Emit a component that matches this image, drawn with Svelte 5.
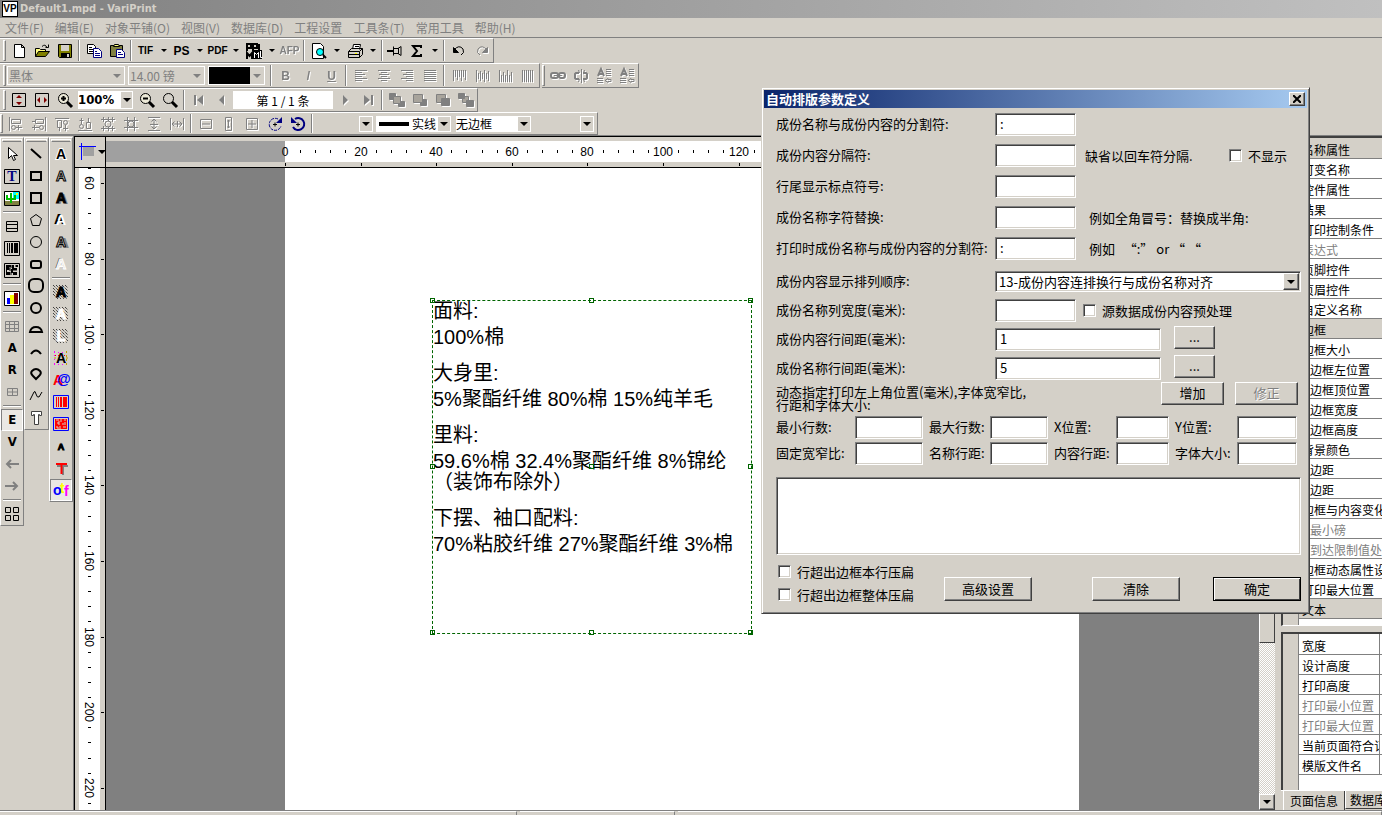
<script>
  const menus = ["文件(F)", "编辑(E)", "对象平铺(O)", "视图(V)", "数据库(D)", "工程设置", "工具条(T)", "常用工具", "帮助(H)"];

  // all icons are drawn on a 16x16 grid
  const lines = (rows) => rows.map(([x, y, w]) => `<path d="M${x} ${y}.5h${w}"/>`).join("");
  const letter = (attrs, extra = "") => `${extra}<text x="8" y="13" text-anchor="middle" ${attrs}>A</text>`;
  const hatch = '<path stroke-dasharray="1 1" d="M0 1l14 14M0 4l11 11M0 7l8 8M0 10l5 5M3 1l12 12M6 1l9 9M9 1l6 6M12 1l3 3"/>';
  const noise = '<path d="M3 4h3M8 3v3M11 4h2M4 7h2v2M9 8h4M3 11h2v2M7 10v3M10 11h3M7 6h-2M12 6v1"/>';
  const bars = '<path d="M3.5 3v10M5.5 3v10M10.5 3v10M13.5 3v10"/><path stroke-width="2" d="M8 3v10M12 3v10"/>';

  const icons = {
    new: '<path fill="#fff" d="M3.5 1.5h7l3 3v10h-10zM10.5 1.5v3h3"/>',
    open: '<path fill="#ffff80" d="M1.5 13.5v-8h4l1 1h5v3"/><path fill="#808000" d="M1.5 13.5l3-5h11l-4 5z"/><path d="M8 3.5q3-3 5 1M14.5 1.5v3h-3"/>',
    save: '<path fill="#808000" d="M1.5 1.5h13v13h-12l-1-1z"/><path fill="#d4d0c8" stroke="none" d="M4 2h8v6H4z"/><path fill="#000" stroke="none" d="M4 10h9v5H4z"/><path fill="#d4d0c8" stroke="none" d="M10 11h2v3h-2z"/>',
    copy: '<path fill="#fff" d="M1.5 1.5h6l2 2v7h-8z"/><path d="M3 4.5h3M3 6.5h4M3 8.5h4"/><path fill="#fff" stroke="#000080" d="M7.5 5.5h5l3 3v6h-8z"/><path stroke="#000080" d="M9 8.5h2M9 10.5h5M9 12.5h5"/>',
    paste: '<path fill="#808040" d="M1.5 2.5h12v11h-12z"/><path fill="#ffff80" d="M4.5 3.5l1-2h4l1 2z"/><path fill="#fff" stroke="#000080" d="M7.5 6.5h5l3 3v5h-8z"/><path stroke="#000080" d="M9 9.5h3M9 11.5h5"/>',
    ppml: '<path fill="#000" stroke="none" d="M7 7h9v9H7z"/><path stroke="#000" stroke-width="2" d="M1 8V1h4v4H1M7 8V1h4v4H7M13 1v6M1 16v-6l2.500 3L6 10v6"/><path stroke="#fff" d="M8.500 15V9.500l2 2 2-2V15M14.500 8v6.500h2"/>',
    preview: '<path fill="#fff" d="M1.5 .5h8l3 3v12h-11z"/><circle cx="9" cy="9" r="3.5" fill="#00ffff"/><path stroke-width="2" d="M12 12l3 3"/>',
    print: '<path fill="#fff" d="M5.5 6.5l1-5h7l-1 5"/><path fill="#d4d0c8" d="M1.5 8.5l3-3h11v6l-3 3h-11zM1.5 8.5h11l3-3M12.5 8.5v6M1 11.5h11"/><path stroke="#ffff00" d="M8 10.5h2"/><path d="M8 3.5h4"/>',
    pin: '<path stroke-width="2" d="M0 8h6"/><path fill="#d4d0c8" d="M6.5 3.5v9M7 5.5h4l3-2v9l-3-2H7M11.5 5v6"/>',
    sigma: '<path stroke-width="2" d="M12 5V3H4l4 5-4 5h8v-2"/>',
    undo: '<path d="M3 7q5-6 9-1 2 4-2 6"/><path fill="currentColor" d="M2.5 4.5v5h5z"/>',
    redo: '<path d="M13 7q-5-6-9-1-2 4 2 6"/><path fill="currentColor" d="M13.5 4.5v5h-5z"/>',
    alignL: lines([[2, 2, 12], [2, 4, 7], [2, 6, 10], [2, 8, 7], [2, 10, 12], [2, 12, 7]]),
    alignC: lines([[2, 2, 12], [5, 4, 6], [3, 6, 10], [5, 8, 6], [2, 10, 12], [5, 12, 6]]),
    alignR: lines([[2, 2, 12], [7, 4, 7], [4, 6, 10], [7, 8, 7], [2, 10, 12], [7, 12, 7]]),
    alignJ: lines([[2, 2, 12], [2, 4, 12], [2, 6, 12], [2, 8, 12], [2, 10, 12], [2, 12, 12]]),
    vertT: '<path d="M2.5 2v11M4.5 2v7M6.5 2v10M8.5 2v7M10.5 2v11M12.5 2v7M14.5 2v10"/>',
    vertC: '<path d="M2.5 2v12M4.5 5v6M6.5 3v10M8.5 5v6M10.5 2v12M12.5 5v6M14.5 3v10"/>',
    vertB: '<path d="M2.5 2v12M4.5 7v7M6.5 4v10M8.5 7v7M10.5 2v12M12.5 7v7M14.5 4v10"/>',
    vertJ: '<path d="M2.5 2v12M4.5 2v12M6.5 2v12M8.5 2v12M10.5 2v12M12.5 2v12"/>',
    link: '<rect x="1" y="5" width="7" height="5" rx="2" stroke-width="2"/><rect x="9" y="5" width="6" height="5" rx="2" stroke-width="2"/><path d="M4 7.5h8"/>',
    unlink: '<path stroke-width="2" d="M6 5H3l-1 1v4l1 1h3M10 5h3l1 1v4l-1 1h-3"/><path d="M8.5 1v14M5.5 2l1 3M11.5 2l-1 3M5.5 14l1-3M11.5 14l-1-3"/>',
    flow: '<path stroke-width="2" d="M2 8l3-7 3 7M3 6h4"/><path d="M10 1.5h5M10 3.5h5M10 5.5h5M10 7.5h5M1 10.5h6M1 12.5h6M1 14.5h6M9 12.5l3-2v1h3v2h-3v1z"/>',
    fitPage: '<path d="M1.5 1.5h13v13h-13z"/><path fill="#800000" stroke="none" d="M8 3l3 3H5zM8 13l3-3H5z"/>',
    fitWidth: '<path d="M1.5 1.5h13v13h-13z"/><path fill="#800000" stroke="none" d="M3 8l3-3v6zM13 8l-3-3v6z"/>',
    zoomIn: '<circle cx="6.5" cy="6.5" r="5" fill="#ece9d8"/><path stroke-width="2" d="M4 6.5h5M6.5 4v5"/><path stroke-width="3" d="M10 10l5 5"/>',
    zoomOut: '<circle cx="6.5" cy="6.5" r="5" fill="#ece9d8"/><path stroke-width="2" d="M4 6.5h5"/><path stroke-width="3" d="M10 10l5 5"/>',
    zoom: '<circle cx="6.5" cy="6.5" r="5" fill="#d4d0c8"/><path stroke-width="3" d="M10 10l5 5"/>',
    first: '<path stroke-width="2" d="M4 3v10"/><path fill="currentColor" stroke="none" d="M12 3v10L6 8z"/>',
    prev: '<path fill="currentColor" stroke="none" d="M10 3v10L5 8z"/>',
    next: '<path fill="currentColor" stroke="none" d="M6 3v10l5-5z"/>',
    last: '<path stroke-width="2" d="M12 3v10"/><path fill="currentColor" stroke="none" d="M4 3v10l6-5z"/>',
    front: '<path fill="currentColor" d="M.5 1.5h6v6h-6zM9.5 9.5h6v5h-6z"/><path fill="#a8a49c" d="M4.5 4.5h7v7h-7z"/>',
    forward: '<path fill="currentColor" d="M8.5 7.5h6v6h-6z"/><path fill="#a8a49c" d="M1.5 2.5h9v8h-9z"/>',
    backward: '<path fill="#a8a49c" d="M1.5 2.5h9v8h-9z"/><path fill="currentColor" d="M6.5 6.5h8v7h-8z"/>',
    back: '<path fill="#a8a49c" d="M4.5 4.5h6v6h-6z"/><path fill="currentColor" d="M.5 1.5h6v5h-6zM8.5 8.5h7v6h-7z"/>',
    edgeL: '<path d="M1.5 1v14M3.5 3.5h9v4h-9z"/><circle cx="5.5" cy="11.5" r="2"/><path d="M8 11.5h6M10.5 9v5"/>',
    edgeR: '<path d="M14.5 1v14M4.5 3.5h8v4h-8z"/><circle cx="10.5" cy="11.5" r="2"/><path d="M1 5.5h3M1 11.5h7M3.5 9v5"/>',
    edgeT: '<path d="M1 2.5h14M3.5 4.5h4v7h-4z"/><circle cx="11.5" cy="6.5" r="2"/><path d="M11.5 9v6M9 12.5h5M5.5 12v3"/>',
    edgeB: '<path d="M1 14.5h14M9.5 6.5h4v6h-4z"/><circle cx="4.5" cy="10.5" r="2"/><path d="M4.5 2v6M2.5 4.5h4M11.5 2v4"/>',
    midH: '<path d="M1 3.5h14M1 12.5h14M3.5 1v5M8.500 1v4M12.5 1v5M3.5 10v5M8.500 11v4M12.5 10v5"/><circle cx="8" cy="8" r="3"/>',
    midV: '<path d="M1 4.5h14M1 11.5h14M4.5 1v14M11.5 1v14"/><circle cx="8" cy="8" r="3"/>',
    sameH: '<path d="M2 1.5h12M2 14.5h12M8 3v10M5.5 5.5L8 3l2.5 2.5M5.5 10.5L8 13l2.5-2.5M4 8.5h8"/>',
    sameW: '<path d="M1.5 2v12M14.5 2v12M3 8h10M5.5 5.5L3 8l2.5 2.5M10.5 5.5L13 8l-2.5 2.5M8.5 5v6"/>',
    boxH: '<path d="M2.5 3.5h11v9h-11zM4 8h8"/>',
    boxV: '<path d="M4.5 1.5h6v13h-6zM7.5 4v8M6 5h3M6 11h3"/>',
    boxHV: '<path d="M2.5 2.5h11v11h-11zM4 8h8M8 4v8"/>',
    rotR: '<path d="M11 3a6 6 0 1 0 3 7" stroke="#000080" stroke-dasharray="3 1"/><path d="M15 1v6H9z" fill="#000080" stroke="none"/><path d="M8 6.500v4M6 8.500h4"/>',
    rotL: '<path d="M5 3a6 6 0 1 1-2 8" stroke="#000080" stroke-width="2"/><path d="M1 1v6h6z" fill="#000080" stroke="none"/><path d="M8 6.500v4M6 8.500h4"/>',
    pointer: '<path fill="#fff" d="M4.5 1.5v11l3-3 2 5 2-1-2-4h4z"/>',
    textBox: '<path d="M.5 1.5h15v14H.5z"/><text class="serif" x="8" y="13" text-anchor="middle" fill="#000080">T</text>',
    image: '<path fill="#fff" d="M.5 1.5h15v14H.5z"/><path fill="#00ffff" stroke="none" d="M9 2h6v7H9z"/><path fill="#808040" stroke="none" d="M1 11h14v4H1z"/><path stroke="#00c000" stroke-width="2" d="M7 3v10M3 5v4h4M11 5v4H7"/><path fill="#ffff00" stroke="none" d="M12 3h2v2h-2z"/>',
    table: '<path d="M2.5 3.5h11v10h-11zM2.5 6.5h11M2.5 10.5h11"/>',
    barcode: '<path d="M.5 1.5h15v14H.5z"/>' + bars,
    matrix: '<path d="M.5 1.5h15v14H.5z"/><path fill="#000" stroke="none" d="M2 3h5v2H5v3H3v2h3v3H2zM8 3h2v3h3v2H9v2h4v3H9v-2H7V7h1zM12 3h2v2h-2z"/>' + noise,
    chart: '<path fill="#fff" d="M.5 1.5h15v14H.5z"/><path fill="#0000ff" stroke="none" d="M3 8h3v6H3z"/><path fill="#ffff00" stroke="none" d="M6 5h4v9H6z"/><path fill="#800000" stroke="none" d="M10 3h4v11h-4z"/>',
    grid: '<path stroke="#808080" d="M1.5 3.5h13v10h-13zM1.5 6.5h13M1.5 10.5h13M5.5 3v11M10.5 3v11"/>',
    smallGrid: '<path stroke="#808080" d="M3.5 4.5h10v7h-10zM3 8h11M8.5 4v8"/>',
    left: '<path stroke="#808080" stroke-width="2" d="M3 8h12M7 4L3 8l4 4"/>',
    right: '<path stroke="#808080" stroke-width="2" d="M1 8h12M9 4l4 4-4 4"/>',
    tiles: '<path d="M1.5 1.5h5v5h-5zM9.5 1.5h5v5h-5zM1.5 9.5h5v5h-5zM9.5 9.5h5v5h-5z"/>',
    line: '<path stroke-width="2" d="M3 3l10 9"/>',
    rect: '<path stroke-width="2" d="M3 4h10v8H3z"/>',
    square: '<path stroke-width="2" d="M3 3h10v10H3z"/>',
    pentagon: '<path d="M8 2.5l5.5 4-2 7h-7l-2-7z"/>',
    circleThin: '<circle cx="8" cy="8" r="5.5"/>',
    roundRect: '<rect stroke-width="2" x="3" y="5" width="10" height="7" rx="2"/>',
    octagon: '<rect stroke-width="2" x="1" y="1" width="14" height="13" rx="5"/>',
    circle: '<circle stroke-width="2" cx="8" cy="8" r="5"/>',
    chord: '<path stroke-width="2" d="M2 10q1-5 6-5t6 5z"/>',
    arc: '<path stroke-width="2" d="M3 10q5-7 10 0"/>',
    drop: '<path stroke-width="2" d="M5 10q-3-3-1-5 4-4 8 0 2 2-1 5l-3 3z"/>',
    curve: '<path d="M2 12l4-8q1-2 2 2t3 3l3-5"/>',
    outlineT: '<path fill="#fff" stroke="#404040" d="M3.5 1.5h10v4h-2v-1h-1v10h-4v-10h-1v1h-2z"/>',
    a1: letter('fill="#000" stroke="#fff" stroke-width="2" paint-order="stroke"'),
    a2: letter('fill="#d4d0c8" stroke="#000"'),
    a3: letter('fill="#000" stroke="#000"', '<text x="10" y="14" text-anchor="middle" fill="#808080">A</text>'),
    a4: letter('fill="#fff"', '<text x="6" y="12" text-anchor="middle">A</text>'),
    a5: letter('fill="#d4d0c8" stroke="#000"', '<text x="11" y="14" text-anchor="middle" fill="#808080">A</text>'),
    a6: letter('fill="#e4e0d8" stroke="#fff"', '<text x="7" y="12" text-anchor="middle" fill="#606060">A</text>'),
    h1: letter('fill="#000" stroke="#000"', hatch),
    h2: letter('fill="#fff" stroke="#fff"', hatch),
    h3: hatch + '<text x="8" y="13" text-anchor="middle" fill="#fff" stroke="#fff">L</text>',
    dots: letter('fill="#000"', '<path stroke="#f0f" stroke-dasharray="1 3" d="M1 2.5h14M1 14.5h14M1.5 1v14"/><path stroke="#c0a000" stroke-dasharray="2 2" d="M1 8h14M13.5 1v14"/><path stroke="#f00" stroke-dasharray="1 2" d="M2 5.5h12"/><path stroke="#00f" d="M4 12.5h2M11 12.5h2"/>'),
    at: '<text x="0" y="13" fill="#f00">A</text><text x="4" y="12" fill="#00f">@</text>',
    redBars: `<g stroke="#f00">${bars}</g><path stroke="#00f" d="M.5 1.5h15v13H.5z"/>`,
    redMatrix: `<path fill="#f00" stroke="none" d="M2 3h12v10H2z"/><g stroke="#d4d0c8">${noise}</g><path stroke="#00f" d="M.5 1.5h15v13H.5z"/>`,
    tinyA: '<text class="tiny" x="8" y="12" text-anchor="middle" stroke="#000">A</text>',
    redT: '<path stroke="#808080" stroke-width="2" d="M4 6h11M10 6v9"/><path stroke="#f00" stroke-width="2" d="M3 4h11M8.5 4v10"/>',
    otf: '<text x="0" y="13" fill="#00f">o</text><text x="7" y="11" fill="#ff0">t</text><text x="11" y="14" fill="#f0f">f</text>',
  };

  const sep = { sep: true };
  const b = (icon, more = {}) => ({ icon, ...more });
  const dis = { disabled: true };

  const standardBar = [
    b("new"), b("open"), b("save"), sep, b("copy"), b("paste"), sep,
    { text: "TIF", drop: true }, { text: "PS", drop: true, wide: true }, { text: "PDF", drop: true },
    b("ppml", { drop: true }), { text: "AFP", disabled: true }, sep,
    b("preview", { drop: true }), b("print", { drop: true }), sep,
    b("pin"), b("sigma", { drop: true }), sep, b("undo"), b("redo", dis),
  ];
  const formatBar = [
    { text: "B", disabled: true, wide: true }, { text: "/", disabled: true, wide: true }, { text: "U", disabled: true, wide: true, under: true }, sep,
    b("alignL", dis), b("alignC", dis), b("alignR", dis), b("alignJ", dis), sep,
    b("vertT", dis), b("vertC", dis), b("vertB", dis), b("vertJ", dis),
  ];
  const linkBar = [b("link", dis), b("unlink", dis), b("flow", dis), b("flow", dis)];
  const arrangeBar = [
    b("edgeL", dis), b("edgeR", dis), b("edgeT", dis), b("edgeB", dis), b("midH", dis), b("midV", dis), b("sameH", dis), b("sameW", dis), sep,
    b("boxH", dis), b("boxV", dis), b("boxHV", dis), b("rotR"), b("rotL"), sep,
  ];

  const palettes = [
    [
      b("pointer"), b("textBox"), b("image"), sep, b("table"), b("barcode"), b("matrix"), sep, b("chart"), sep, b("grid"),
      { text: "A" }, { text: "R" }, b("smallGrid"), sep, { text: "E", pressed: true }, { text: "V" }, b("left"), b("right"), sep, b("tiles"),
    ],
    ["line", "rect", "square", "pentagon", "circleThin", "roundRect", "octagon", "circle", "chord", "arc", "drop", "curve", "outlineT"].map((n) => b(n)),
    [
      b("a1"), b("a2"), b("a3"), b("a4"), b("a5"), b("a6"), sep, b("h1"), b("h2"), b("h3"), b("dots"), b("at"),
      b("redBars"), b("redMatrix"), b("tinyA"), b("redT"), b("otf", { pressed: true }),
    ],
  ];

  // ruler: 3.78 px per millimetre, a tick every 4 mm, a number every 20 mm
  const scale = 3.78;
  const hMarks = Array.from({ length: 53 }, (_, i) => i * 4);
  const vMarks = Array.from({ length: 43 }, (_, i) => 56 + i * 4);
  const hPos = (v) => Math.round(179 + v * scale);
  const vPos = (v) => Math.round(15 + (v - 60) * scale);

  const fabric = [
    { name: "面料:", lines: ["100%棉"] },
    { name: "大身里:", lines: ["5%聚酯纤维 80%棉 15%纯羊毛"] },
    { name: "里料:", lines: ["59.6%棉 32.4%聚酯纤维 8%锦纶", "（装饰布除外）"] },
    { name: "下摆、袖口配料:", lines: ["70%粘胶纤维 27%聚酯纤维 3%棉"] },
  ];

  const props = [
    ["名称属性", "group"], ["可变名称"], ["控件属性"], ["结果"], ["打印控制条件"], ["表达式", "dim"], ["页脚控件"], ["页眉控件"],
    ["自定义名称"], ["边框", "group"], ["边框大小"], ["边框左位置", "sub"], ["边框顶位置", "sub"], ["边框宽度", "sub"],
    ["边框高度", "sub"], ["背景颜色"], ["边距", "sub"], ["边距", "sub"], ["边框与内容变化"], ["最小磅", "sub dim"],
    ["到达限制值处理", "sub dim"], ["边框动态属性设置"], ["打印最大位置"], ["文本", "group"],
  ];
  const pageProps = [["宽度"], ["设计高度"], ["打印高度"], ["打印最小位置", "dim"], ["打印最大位置", "dim"], ["当前页面符合订单"], ["模版文件名"]];

  const cells = [
    ["minRows", "最小行数:"], ["maxRows", "最大行数:"], ["posX", "X位置:"], ["posY", "Y位置:"],
    ["ratio", "固定宽窄比:"], ["nameGap", "名称行距:"], ["bodyGap", "内容行距:"], ["fontSize", "字体大小:"],
  ];

  let splitter = $state(":");
  let printSplitter = $state(":");
  let bodyLine = $state("1");
  let nameLine = $state("5");
  let open = $state(true);
</script>

{#snippet icon(name)}
  <svg class="icon" viewBox="0 0 16 16" aria-hidden="true">{@html icons[name]}</svg>
{/snippet}

{#snippet tool(item)}
  {#if item.sep}
    <span class="sep"></span>
  {:else}
    <button class="tool" class:pressed={item.pressed} class:pin={item.icon === "pin"} disabled={item.disabled} aria-label={item.icon || item.text}>
      {#if item.icon}
        {@render icon(item.icon)}
      {:else}
        <span class="glyph" class:wide={item.wide} class:under={item.under}>{item.text}</span>
      {/if}
    </button>
    {#if item.drop}
      <button class="drop" aria-label="more"><span class="arrow"></span></button>
    {/if}
  {/if}
{/snippet}

{#snippet combo(kind, label, value, disabled)}
  <span class="combo {kind}">
    <select aria-label={label} {disabled}><option>{value}</option></select>
    <span class="combo-button"><span class="arrow"></span></span>
  </span>
{/snippet}

<div class="app">
  <header class="title"><span class="logo">VP</span>Default1.mpd - VariPrint</header>
  <nav class="menu">
    {#each menus as m}
      <button>{m}</button>
    {/each}
  </nav>

  <div class="bars">
    <div class="bar">
      {#each standardBar as item}{@render tool(item)}{/each}
    </div>
    <div class="pair">
      <div class="bar">
        {@render combo("flat font", "字体", "黑体", true)}
        {@render combo("flat size", "字号", "14.00 镑", true)}
        {@render combo("flat color", "颜色", "", true)}
        <span class="sep"></span>
        {#each formatBar as item}{@render tool(item)}{/each}
      </div>
      <div class="bar">
        {#each linkBar as item}{@render tool(item)}{/each}
      </div>
    </div>
    <div class="bar">
      {#each [b("fitPage"), b("fitWidth"), b("zoomIn")] as item}{@render tool(item)}{/each}
      {@render combo("zoom", "缩放", "100%", false)}
      {#each [b("zoomOut"), b("zoom"), sep, b("first", dis), b("prev", dis)] as item}{@render tool(item)}{/each}
      <input class="record" aria-label="记录" value="第 1 / 1 条" />
      {#each [b("next", dis), b("last", dis), sep, b("front", dis), b("forward", dis), b("backward", dis), b("back", dis)] as item}{@render tool(item)}{/each}
    </div>
    <div class="bar">
      {#each arrangeBar as item}{@render tool(item)}{/each}
      {@render combo("blank", "线宽", "", false)}
      <span class="combo stroke">
        <span class="sample"></span>
        <select aria-label="线型"><option>实线</option></select>
        <span class="combo-button"><span class="arrow"></span></span>
      </span>
      {@render combo("border", "边框", "无边框", false)}
      {@render combo("blank", "样式", "", false)}
    </div>
  </div>

  <main class="work">
    <div class="palettes">
      {#each palettes as palette}
        <div class="palette">
          {#each palette as item}{@render tool(item)}{/each}
        </div>
      {/each}
    </div>

    <section class="editor">
      <div class="corner">
        <svg width="18" height="18" aria-hidden="true"><path fill="#a0a0a0" d="M4 4h11v9H4z" /><path stroke="#00f" d="M0 3.5h17M2.5 0v17" /></svg>
        <span class="arrow"></span>
      </div>
      <div class="h-ruler">
        <svg width="100%" height="100%">
          <rect width="100%" height="21" y="4" fill="#fff" />
          <rect width="179" height="21" y="4" fill="#a0a0a0" />
          {#each hMarks as v}
            {#if v % 20 === 0}
              <text x={hPos(v)} y="19" text-anchor="middle">{v}</text>
              <rect x={hPos(v)} y="26" width="1" height="3" />
            {:else}
              <rect x={hPos(v)} y="13" width="1" height="3" />
            {/if}
          {/each}
        </svg>
      </div>
      <div class="v-ruler">
        <svg width="100%" height="100%">
          <rect x="4" width="21" height="100%" fill="#fff" />
          {#each vMarks as v}
            {#if v % 20 === 0}
              <text x={vPos(v)} y="-10" text-anchor="middle" transform="rotate(90)">{v}</text>
              <rect x="26" y={vPos(v)} width="3" height="1" />
            {:else}
              <rect x="13" y={vPos(v)} width="3" height="1" />
            {/if}
          {/each}
        </svg>
      </div>
      <div class="canvas">
        <div class="paper">
          <div class="frame">
            {#each fabric as part}
              <div class="part">
                <p>{part.name}</p>
                <p>{#each part.lines as l, i}{#if i}<br />{/if}{l}{/each}</p>
              </div>
            {/each}
            {#each ["nw", "n", "ne", "w", "c", "e", "sw", "s", "se"] as h}
              <i class="handle {h}"></i>
            {/each}
          </div>
        </div>
      </div>
      <div class="scroll">
        <span class="thumb"></span>
        <button class="raised" aria-label="down"><span class="arrow"></span></button>
      </div>
    </section>

    <aside class="side">
      <div class="pane props">
        <table>
          <tbody>
            {#each props as [name, kind]}
              <tr class={kind}><td>{name}</td></tr>
            {/each}
          </tbody>
        </table>
      </div>
      <div class="pane page">
        <table>
          <tbody>
            {#each pageProps as [name, kind]}
              <tr class={kind}><td>{name}</td><td class="value"></td></tr>
            {/each}
          </tbody>
        </table>
      </div>
      <div class="tabs">
        <button class="active">页面信息</button>
        <button>数据库</button>
      </div>
    </aside>
  </main>
  <footer class="status"><span></span><span></span><span></span></footer>

  {#if open}
    <div class="dialog" role="dialog" aria-labelledby="dialog-title">
      <div class="dialog-title">
        <span id="dialog-title">自动排版参数定义</span>
        <button class="raised close" aria-label="关闭" onclick={() => (open = false)}>
          <svg width="8" height="8" aria-hidden="true"><path d="M0 0l8 8M8 0l-8 8" stroke="#000" stroke-width="2" /></svg>
        </button>
      </div>
      <div class="dialog-body">
        <div class="fields">
          <label for="splitter">成份名称与成份内容的分割符:</label>
          <div><input id="splitter" bind:value={splitter} /></div>
          <label for="inner">成份内容分隔符:</label>
          <div>
            <input id="inner" />
            <span class="note">缺省以回车符分隔.</span>
            <label class="check end"><input type="checkbox" />不显示</label>
          </div>
          <label for="tail">行尾显示标点符号:</label>
          <div><input id="tail" /></div>
          <label for="replace">成份名称字符替换:</label>
          <div><input id="replace" /><span class="note far">例如全角冒号：替换成半角:</span></div>
          <label for="print-splitter">打印时成份名称与成份内容的分割符:</label>
          <div><input id="print-splitter" bind:value={printSplitter} /><span class="note far">例如 &nbsp; “:” or “ “</span></div>
        </div>
        <div class="fields tight">
          <label for="order">成份内容显示排列顺序:</label>
          <div class="order">
            <select id="order"><option>13-成份内容连排换行与成份名称对齐</option></select>
            <span class="raised order-button"><span class="arrow"></span></span>
          </div>
          <label for="name-width">成份名称列宽度(毫米):</label>
          <div><input id="name-width" /><label class="check"><input type="checkbox" />源数据成份内容预处理</label></div>
          <label for="body-line">成份内容行间距(毫米):</label>
          <div><input id="body-line" class="long" bind:value={bodyLine} /><button class="raised dots">...</button></div>
          <label for="name-line">成份名称行间距(毫米):</label>
          <div><input id="name-line" class="long" bind:value={nameLine} /><button class="raised dots">...</button></div>
        </div>
        <div class="dynamic">
          <p>动态指定打印左上角位置(毫米),字体宽窄比,<br />行距和字体大小:</p>
          <button class="raised">增加</button>
          <button class="raised" disabled>修正</button>
        </div>
        <div class="cells">
          {#each cells as [id, text]}
            <label for={id}>{text}</label>
            <input {id} />
          {/each}
        </div>
        <textarea aria-label="动态位置"></textarea>
        <div class="bottom">
          <div class="checks">
            <label class="check"><input type="checkbox" />行超出边框本行压扁</label>
            <label class="check"><input type="checkbox" />行超出边框整体压扁</label>
          </div>
          <button class="raised">高级设置</button>
          <button class="raised clear">清除</button>
          <button class="raised ok">确定</button>
        </div>
      </div>
    </div>
  {/if}
</div>

<style>
  :global(body) {
    background: #d4d0c8;
    overflow: hidden;
  }
  .app {
    position: relative;
    display: flex;
    flex-direction: column;
    height: 100vh;
    overflow: hidden;
    background: #d4d0c8;
    color: #000;
    font: 12px/16px "Noto Sans CJK SC", sans-serif;
  }
  .app *,
  .app *::before {
    box-sizing: border-box;
  }
  button,
  select,
  input,
  textarea {
    margin: 0;
    padding: 0;
    border: 0;
    border-radius: 0;
    outline: 0;
    background: none;
    color: inherit;
    font: inherit;
  }
  select {
    appearance: none;
    min-width: 0;
    opacity: 1;
  }
  p {
    margin: 0;
  }
  .arrow {
    flex: none;
    border: 4px solid transparent;
    border-top-color: #000;
    border-bottom: 0;
    width: 0;
    height: 0;
  }

  .title {
    display: flex;
    align-items: center;
    flex: none;
    gap: 2px;
    height: 18px;
    padding-left: 2px;
    background: linear-gradient(90deg, #808080, #c0c0c0);
    color: #d4d0c8;
    font: bold 11px/16px "DejaVu Sans Condensed", "DejaVu Sans", sans-serif;
  }
  .logo {
    width: 16px;
    height: 16px;
    border: 1px solid #000;
    background: #fff;
    color: #000;
    font: bold 10px/14px "Liberation Sans", sans-serif;
    text-align: center;
  }
  .menu {
    display: flex;
    flex: none;
    height: 20px;
    border-bottom: 1px solid #808080;
  }
  .menu button {
    padding: 0 6px 0 5px;
    color: #808080;
  }

  /* toolbars */
  .bars {
    flex: none;
    display: grid;
    justify-items: start;
    height: 97px;
    grid-template-rows: 25px 25px 24px 23px;
  }
  .pair {
    display: flex;
    gap: 2px;
  }
  .bar {
    display: flex;
    align-items: center;
    padding-left: 3px;
    border-top: 1px solid #fff;
    border-right: 1px solid #808080;
    border-bottom: 1px solid #808080;
  }
  .bar + .bar {
    padding-left: 0;
  }
  .bar::before {
    content: "";
    align-self: stretch;
    width: 3px;
    margin: 1px 1px 1px 0;
    border: 1px solid #808080;
    border-left-color: #fff;
    border-top-color: #fff;
  }
  .tool {
    display: grid;
    place-items: center;
    flex: none;
    width: 23px;
    height: 22px;
    color: #000;
  }
  .tool.pin {
    width: 20px;
  }
  .tool:disabled {
    color: #808080;
    filter: drop-shadow(1px 1px 0 #fff);
  }
  .icon {
    display: block;
    width: 16px;
    height: 16px;
    fill: none;
    stroke: currentColor;
    overflow: visible;
  }
  .icon :global(text) {
    font: bold 14px "Liberation Sans", sans-serif;
  }
  .icon :global(text:not([fill])) {
    fill: #000;
  }
  .icon :global(text:not([stroke])) {
    stroke: none;
  }
  .icon :global(text.serif) {
    font-family: "Liberation Serif", serif;
  }
  .icon :global(text.tiny) {
    font-size: 9px;
  }
  .glyph {
    font: bold 10px/16px "Liberation Sans", sans-serif;
  }
  .glyph.wide {
    font-size: 12px;
  }
  .glyph.under {
    text-decoration: underline;
  }
  .drop {
    display: grid;
    place-items: center;
    flex: none;
    width: 13px;
    height: 22px;
  }
  .drop .arrow {
    border-width: 3px 3px 0;
  }
  .sep {
    align-self: stretch;
    flex: none;
    width: 2px;
    margin: 1px 2px;
    border-left: 1px solid #808080;
    border-right: 1px solid #fff;
  }

  .combo {
    display: flex;
    height: 16px;
    margin-right: 3px;
    background: #fff;
  }
  .combo select {
    flex: 1;
    line-height: 16px;
  }
  .combo-button {
    display: grid;
    place-items: center;
    flex: none;
    width: 14px;
    border: 1px solid #fff;
    background: #d4d0c8;
    pointer-events: none;
  }
  .combo.flat {
    height: 19px;
    border: 1px solid #fff;
    background: #d4d0c8;
    color: #808080;
  }
  .combo.flat .combo-button {
    border: 0;
  }
  .combo.flat .arrow {
    border-top-color: #808080;
  }
  .combo.flat select {
    padding-left: 1px;
  }
  .combo.font {
    width: 118px;
  }
  .combo.size {
    width: 77px;
  }
  .combo.color {
    width: 57px;
  }
  .combo.color select {
    background: #000;
  }
  .combo.zoom {
    width: 55px;
    height: 18px;
    margin: 0 2px;
    font: bold 13px/18px "DejaVu Sans Condensed", sans-serif;
  }
  .combo.zoom .combo-button {
    width: 13px;
  }
  .combo.blank {
    width: 58px;
    background: #d4d0c8;
  }
  .combo.stroke,
  .combo.border {
    width: 75px;
    margin-right: 5px;
  }
  .sample {
    align-self: center;
    width: 30px;
    height: 4px;
    margin: 0 3px;
    background: #000;
  }
  .record {
    width: 100px;
    height: 18px;
    background: #fff;
    text-align: center;
  }

  /* workspace */
  .work {
    display: flex;
    flex: 1;
    min-height: 0;
    border-top: 1px solid #808080;
  }
  .palettes {
    display: flex;
    align-items: flex-start;
    flex: none;
    width: 74px;
    padding-top: 1px;
    border-right: 1px solid #808080;
  }
  .palette {
    display: flex;
    flex-direction: column;
    align-items: center;
    width: 25px;
    border: 1px solid #808080;
    border-left-color: #fff;
    border-top-color: #fff;
  }
  .palette::before {
    content: "";
    align-self: stretch;
    height: 3px;
    margin: 1px;
    border: 1px solid #fff;
    border-bottom-color: #808080;
  }
  .palette .tool {
    width: 22px;
    height: 22px;
  }
  .palette .glyph {
    font: bold 13px/16px "DejaVu Sans Condensed", sans-serif;
  }
  .palette .sep {
    width: auto;
    height: 2px;
    margin: 2px;
    border: 0;
    border-top: 1px solid #808080;
    border-bottom: 1px solid #fff;
  }
  .tool.pressed {
    border: 1px solid #808080;
    border-right-color: #fff;
    border-bottom-color: #fff;
    background: #eae8e4;
  }

  .editor {
    display: grid;
    flex: 1;
    min-width: 0;
    grid-template: 31px 1fr / 32px 1fr 16px;
    border-top: 1px solid #000;
    margin-right: 6px;
  }
  .corner {
    display: flex;
    align-items: center;
    gap: 1px;
    padding-left: 4px;
    border-right: 1px solid #000;
    border-left: 1px solid #000;
    border-bottom: 1px solid #000;
  }
  .corner svg {
    flex: none;
    fill: none;
  }
  .h-ruler {
    grid-column: 2 / 4;
    min-width: 0;
    overflow: hidden;
    border-bottom: 1px solid #000;
  }
  .v-ruler {
    min-height: 0;
    overflow: hidden;
    border-right: 1px solid #000;
    border-left: 1px solid #000;
  }
  .h-ruler svg,
  .v-ruler svg {
    display: block;
    font: 12px "Liberation Sans", sans-serif;
  }
  .canvas {
    display: flex;
    min-width: 0;
    min-height: 0;
    overflow: hidden;
    background: #808080;
  }
  .paper {
    position: relative;
    flex: none;
    width: 794px;
    margin-left: 179px;
    background: #fff;
  }
  .frame {
    position: absolute;
    left: 147px;
    top: 132px;
    width: 320px;
    height: 334px;
    border: 1px dashed #006400;
    font: 20px/21px "Liberation Sans", "Noto Sans CJK SC", sans-serif;
    white-space: nowrap;
  }
  .part {
    display: grid;
    gap: 5px;
    margin-bottom: 15px;
  }
  .handle {
    position: absolute;
    width: 5px;
    height: 5px;
    margin: -3px;
    border: 1px solid #006400;
  }
  .n, .c, .s {
    left: 50%;
  }
  .w, .c, .e {
    top: 50%;
  }
  .nw, .w, .sw {
    left: 0;
  }
  .ne, .e, .se {
    left: 100%;
  }
  .nw, .n, .ne {
    top: 0;
  }
  .sw, .s, .se {
    top: 100%;
  }
  .raised {
    border: 1px solid #404040;
    border-left-color: #fff;
    border-top-color: #fff;
    background: #d4d0c8;
    box-shadow: inset -1px -1px #808080;
  }
  .scroll {
    display: flex;
    flex-direction: column;
    min-height: 0;
    background: repeating-conic-gradient(#fff 0 25%, #d4d0c8 0 50%) 0 0 / 2px 2px;
  }
  .thumb {
    height: 74%;
    border: 1px solid #404040;
    border-left-color: #fff;
    border-top-color: #fff;
    background: #d4d0c8;
  }
  .scroll button {
    display: grid;
    place-items: center;
    height: 16px;
    margin-top: auto;
  }

  /* property panes */
  .side {
    display: flex;
    flex-direction: column;
    flex: none;
    width: 101px;
    overflow: hidden;
  }
  .pane {
    flex: none;
    overflow: hidden;
    padding-left: 16px;
    border-top: 2px solid #404040;
    border-left: 2px solid #404040;
    background: linear-gradient(90deg, #d4d0c8 15px, #808080 15px, #808080 16px, #fff 16px);
  }
  .props {
    height: 490px;
    margin-bottom: 6px;
    border-bottom: 1px solid #fff;
  }
  .page {
    flex: 1;
  }
  table {
    width: 100%;
    border-collapse: collapse;
    table-layout: fixed;
  }
  td {
    height: 20px;
    padding: 3px 0 0 3px;
    border-bottom: 1px solid #808080;
    line-height: 15px;
    white-space: nowrap;
    overflow: hidden;
  }
  .page td {
    border-right: 1px solid #808080;
  }
  .page .value {
    width: 3px;
    padding: 0;
    border-right: 0;
  }
  .group td {
    background: #d4d0c8;
  }
  .dim td {
    color: #808080;
  }
  .sub td {
    padding-left: 11px;
  }
  .tabs {
    display: flex;
    flex: none;
    height: 20px;
    padding-left: 2px;
    border-top: 1px solid #fff;
  }
  .tabs button {
    flex: none;
    height: 18px;
    padding: 0 4px;
    border-right: 1px solid #404040;
    border-bottom: 1px solid #404040;
    border-left: 1px solid #fff;
    white-space: nowrap;
  }
  .tabs .active {
    height: 20px;
    padding: 0 6px;
  }
  .status {
    display: flex;
    flex: none;
    gap: 3px;
    height: 5px;
    border-top: 1px solid #808080;
  }
  .status span {
    width: 517px;
    border-top: 1px solid #fff;
    border-right: 1px solid #808080;
  }
  .status span + span {
    width: 155px;
  }
  .status span:last-child {
    flex: 1;
  }

  /* dialog window */
  .dialog {
    position: absolute;
    left: 761px;
    top: 87px;
    width: 549px;
    border: 1px solid #404040;
    border-left-color: #d4d0c8;
    border-top-color: #d4d0c8;
    background: #d4d0c8;
    box-shadow: inset 1px 1px #fff, inset -1px -1px #808080;
    font-size: 13px;
    line-height: 13px;
  }
  .dialog-title {
    display: flex;
    align-items: center;
    justify-content: space-between;
    height: 18px;
    margin: 2px;
    padding: 0 2px;
    background: linear-gradient(90deg, #0a246a, #a6caf0);
    color: #fff;
    font-weight: 700;
  }
  .dialog-title span {
    padding-bottom: 2px;
  }
  .close {
    display: grid;
    place-items: center;
    width: 16px;
    height: 14px;
  }
  .dialog-body {
    padding: 3px 8px 12px 14px;
  }
  .fields {
    display: grid;
    grid-template-columns: 219px 1fr;
    grid-auto-rows: 23px;
    align-items: center;
    row-gap: 8px;
    margin-bottom: 10px;
    white-space: nowrap;
  }
  .fields.tight {
    row-gap: 6px;
    margin-bottom: 2px;
  }
  .fields > label,
  .cells label {
    padding-bottom: 2px;
  }
  .fields > div {
    display: flex;
    align-items: center;
  }
  .dialog input,
  .dialog textarea,
  .fields .order {
    border: 1px solid #fff;
    border-left-color: #808080;
    border-top-color: #808080;
    background: #fff;
    box-shadow: inset 1px 1px #404040, inset -1px -1px #d4d0c8;
  }
  .fields input {
    width: 81px;
    height: 23px;
    padding: 0 4px 2px;
  }
  .fields input.long {
    width: 166px;
  }
  .note {
    margin-left: 9px;
  }
  .note.far {
    margin-left: 13px;
  }
  .fields .check {
    display: flex;
    align-items: center;
    gap: 6px;
    margin-left: 7px;
  }
  .check {
    display: flex;
    align-items: center;
    gap: 6px;
  }
  .dialog .check input {
    appearance: none;
    flex: none;
    width: 13px;
    height: 13px;
    padding: 0;
  }
  .fields .check.end {
    margin: 0 14px 0 auto;
  }
  .order {
    height: 21px;
    padding: 1px;
  }
  .order select {
    flex: 1;
    height: 17px;
    padding-left: 2px;
    line-height: 15px;
  }
  .order-button {
    display: grid;
    place-items: center;
    width: 16px;
    height: 17px;
    pointer-events: none;
  }
  .dots {
    width: 41px;
    height: 23px;
    margin-left: 13px;
    margin-bottom: 4px;
  }
  .dynamic {
    display: flex;
    align-items: flex-start;
    gap: 11px;
    height: 34px;
    padding-right: 3px;
  }
  .dynamic p {
    flex: 1;
    padding-top: 3px;
  }
  .dynamic button {
    width: 63px;
    height: 23px;
  }
  .dialog button {
    padding-bottom: 2px;
  }
  .dialog .close {
    padding: 0;
  }
  .dialog button:disabled {
    color: #808080;
    text-shadow: 1px 1px #fff;
  }
  .cells {
    display: grid;
    grid-template-columns: 79px 68px 67px 58px 68px 53px 68px 60px;
    grid-auto-rows: 23px;
    align-items: center;
    row-gap: 3px;
    white-space: nowrap;
  }
  .cells label:not(:nth-of-type(4n + 1)) {
    padding-left: 6px;
  }
  .cells input {
    height: 23px;
    padding-left: 2px;
  }
  .cells input,
  .dialog textarea {
    width: 100%;
    min-width: 0;
  }
  .dialog textarea {
    display: block;
    height: 78px;
    margin: 12px 0 10px;
    resize: none;
  }
  .bottom {
    display: flex;
    align-items: flex-end;
  }
  .checks {
    display: grid;
    gap: 10px;
    width: 168px;
    padding-left: 2px;
  }
  .bottom button {
    width: 88px;
    height: 24px;
  }
  .bottom .clear {
    margin-left: auto;
  }
  .bottom .ok {
    margin-left: 33px;
    border: 1px solid #000;
    box-shadow: inset 1px 1px #fff, inset -1px -1px #404040;
  }
</style>
